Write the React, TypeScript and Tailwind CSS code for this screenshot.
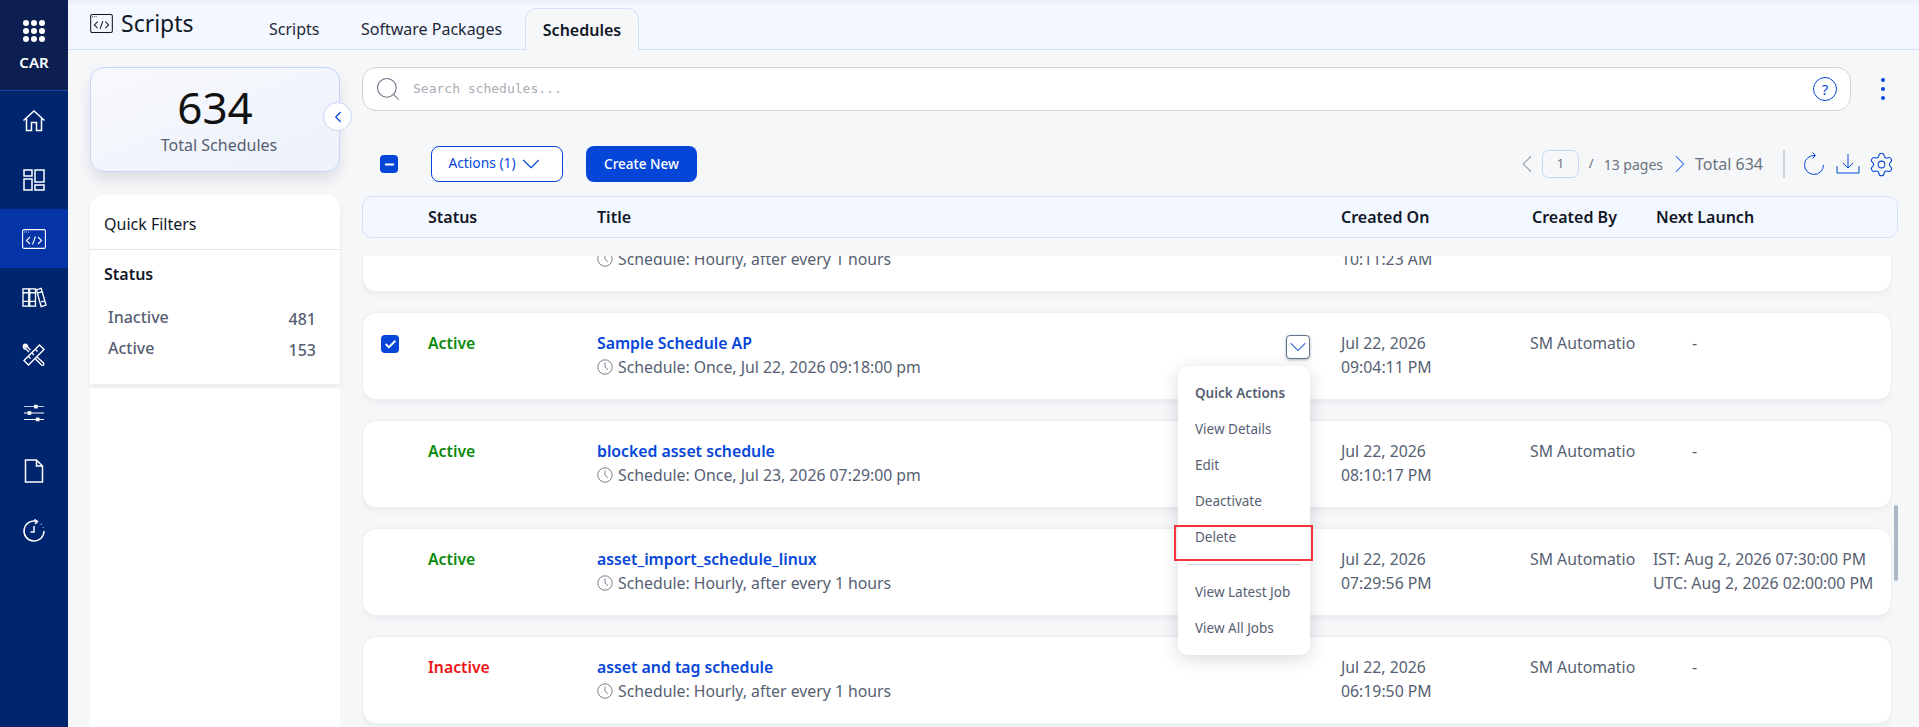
import { ChevronDown, ChevronLeft, ChevronRight, Check, Minus, Search, Settings } from "lucide-react";

const font = { fontFamily: '"Noto Sans", sans-serif' };

function CodeWindow({ className }: { className: string }) {
  return (
    <svg viewBox="0 0 24 20" fill="none" stroke="currentColor" strokeWidth="1.1" className={className}>
      <rect x="0.6" y="0.6" width="22.8" height="18.8" rx="1.5" />
      <path d="M2 3h.8M4 3h.8M6 3h.8" />
      <path d="M8 8l-3.5 3.5L8 15M16 8l3.5 3.5L16 15M13.4 7.500l-2.800 8" />
    </svg>
  );
}

function NavIcon({ name }: { name: string }) {
  const cls = "w-[24px] h-[24px] text-white";
  if (name === "home")
    return (
      <svg viewBox="0 0 24 24" fill="none" stroke="currentColor" strokeWidth="1.5" className={cls}>
        <path d="M1.500 11.500L12 2l10.500 9.500M4.500 9.500V21.500H9.500V13.500H14.500V21.500H19.500V9.500" />
      </svg>
    );
  if (name === "dash")
    return (
      <svg viewBox="0 0 24 24" fill="none" stroke="currentColor" strokeWidth="1.5" className={cls}>
        <rect x="2" y="2" width="8" height="6" />
        <rect x="2" y="11" width="8" height="11" />
        <rect x="13" y="2" width="9" height="12" />
        <rect x="13" y="17" width="9" height="5" />
      </svg>
    );
  if (name === "code") return <CodeWindow className="w-[24px] h-[20px] text-white" />;
  if (name === "library")
    return (
      <svg viewBox="0 0 26 24" fill="none" stroke="currentColor" strokeWidth="1.4" className="w-[25px] h-[23px] text-white">
        <rect x="1" y="3" width="6" height="18" />
        <rect x="8" y="3" width="6" height="18" />
        <path d="M15 4l5-1.500 5 17.500-5 1.500zM1 7h6M1 16h6M8 7h6M8 16h6M16 7.500l5-1.500M20 16.500l3.500-1" />
      </svg>
    );
  if (name === "tools")
    return (
      <svg viewBox="0 0 24 24" fill="none" stroke="currentColor" strokeWidth="1.4" className={cls}>
        <path d="M2 17.500L17.500 2l4.500 4.500L6.500 22z" />
        <path d="M6.500 13.500l2 2M10 10l2 2M13.500 6.500l2 2" />
        <path d="M8.500 7L5.500 4C6 2 4 .800 2.500 1.500L4.500 3.500 3.500 4.500 1.500 2.500C.800 4.500 2 6.500 4 6L7 9M15 14l6.500 6c1 1.500-.500 3-2 2l-6-6" />
      </svg>
    );
  if (name === "sliders")
    return (
      <svg viewBox="0 0 24 24" fill="currentColor" className="w-[22px] h-[22px] text-white">
        <path d="M1 4.500h22v1H1zM1 11.500h22v1H1zM1 18.500h22v1H1z" />
        <rect x="12" y="3" width="4" height="4" />
        <rect x="5" y="10" width="4" height="4" />
        <rect x="14" y="17" width="4" height="4" />
      </svg>
    );
  if (name === "file")
    return (
      <svg viewBox="0 0 20 24" fill="none" stroke="currentColor" strokeWidth="1.5" className="w-[20px] h-[24px] text-white">
        <path d="M1.500 1h11l6 6v16h-17zM12.500 1v6h6" />
      </svg>
    );
  return (
    <svg viewBox="0 0 24 24" fill="none" stroke="currentColor" strokeWidth="1.5" className={cls}>
      <path d="M15 2.500A10 10 0 1 0 22 12" />
      <path d="M12 7v6l-3.500 0M12.500 .500l3 2-2.500 2.500" />
      <path d="M19 5l.500.500M21.200 8l.200.600" />
    </svg>
  );
}

function ClockIcon() {
  return (
    <svg viewBox="0 0 16 16" fill="none" stroke="#6b7280" strokeWidth="0.9" className="w-[16px] h-[16px] shrink-0">
      <circle cx="8" cy="8" r="7.2" />
      <path d="M8 3.500V8l3 2.800" />
    </svg>
  );
}

const nav = ["home", "dash", "code", "library", "tools", "sliders", "file", "clock"];

const rows = [
  // first row is scrolled mostly out of view, only its lower line shows
  { status: "", title: "", schedule: "Schedule: Hourly, after every 1 hours", date: "", time: "10:11:23 AM", by: "", next: [] as string[], checked: false },
  { status: "Active", title: "Sample Schedule AP", schedule: "Schedule: Once, Jul 22, 2026 09:18:00 pm", date: "Jul 22, 2026", time: "09:04:11 PM", by: "SM Automatio", next: [], checked: true },
  { status: "Active", title: "blocked asset schedule", schedule: "Schedule: Once, Jul 23, 2026 07:29:00 pm", date: "Jul 22, 2026", time: "08:10:17 PM", by: "SM Automatio", next: [], checked: false },
  { status: "Active", title: "asset_import_schedule_linux", schedule: "Schedule: Hourly, after every 1 hours", date: "Jul 22, 2026", time: "07:29:56 PM", by: "SM Automatio", next: ["IST: Aug 2, 2026 07:30:00 PM", "UTC: Aug 2, 2026 02:00:00 PM"], checked: false },
  { status: "Inactive", title: "asset and tag schedule", schedule: "Schedule: Hourly, after every 1 hours", date: "Jul 22, 2026", time: "06:19:50 PM", by: "SM Automatio", next: [], checked: false },
];

const menu = ["View Details", "Edit", "Deactivate", "Delete"];

function QuickMenu() {
  return (
    <div className="absolute left-[815px] top-[53px] w-[132px] h-[289px] bg-white rounded-[10px] shadow-[0_4px_18px_rgba(15,23,42,0.16)] pl-[17px] pr-[9px] pt-[15px] z-20 text-[13.5px] text-[#566072]">
      <div className="h-[24px] leading-[24px] font-semibold">Quick Actions</div>
      {menu.map((m) => (
        <div key={m} className="h-[36px] pt-[12px] leading-[24px]">{m}</div>
      ))}
      <div className="border-t border-[#cbd5e1] -ml-[8px] mt-[15px] mb-[15px]" />
      <div className="h-[24px] leading-[24px]">View Latest Job</div>
      <div className="h-[36px] pt-[12px] leading-[24px]">View All Jobs</div>
      <div className="absolute left-[-4px] top-[159px] w-[139px] h-[36px] border-2 border-[#f5333f] pointer-events-none" />
    </div>
  );
}

function Row({ r, first }: { r: (typeof rows)[number]; first?: boolean }) {
  const color = r.status === "Active" ? "text-[#0a8a0a]" : "text-[#f01414]";
  return (
    <div
      className={
        "relative h-[88px] shrink-0 bg-white rounded-[14px] border border-[#eceef2] shadow-[0_2px_6px_rgba(15,23,42,0.06)] grid grid-cols-[47px_169px_744px_189px_124px_1fr] pl-[18px] pt-[18px] text-[15.8px] leading-[24px] text-[#566072] " +
        (r.checked ? "z-10 " : "") +
        (first ? "-mt-[52px]" : "")
      }
    >
      <div>
        {r.checked && (
          <span className="mt-[4px] w-[18px] h-[18px] rounded-[4px] bg-[#0546d9] flex items-center justify-center">
            <Check size={13} strokeWidth={3.5} className="text-white" />
          </span>
        )}
      </div>
      <div className={"font-semibold " + color}>{r.status}</div>
      <div className="relative">
        <div className="font-semibold text-[#0546d9]">{r.title || "\u00a0"}</div>
        <div className="flex items-center gap-[5px]">
          <ClockIcon />
          <span>{r.schedule}</span>
        </div>
        {r.checked && (
          <span className="absolute left-[689px] top-[4px] w-[24px] h-[24px] rounded-[4px] bg-white border border-[#64748b] shadow-[0_1px_3px_rgba(15,23,42,0.35)] flex items-center justify-center">
            <ChevronDown size={28} strokeWidth={0.9} className="shrink-0 text-[#0546d9]" />
          </span>
        )}
      </div>
      <div>
        <div>{r.date || "\u00a0"}</div>
        <div>{r.time}</div>
      </div>
      <div className="whitespace-nowrap">{r.by}</div>
      <div className="whitespace-nowrap">
        {r.next.length ? r.next.map((n) => <div key={n} className="-ml-[1px]">{n}</div>) : r.by && <div className="pl-[38px]">-</div>}
      </div>
      {r.checked && <QuickMenu />}
    </div>
  );
}

export default function App() {
  return (
    <div className="flex h-screen overflow-hidden bg-[#f6f7f9] text-[#111827]" style={font}>
      <aside className="w-[68px] shrink-0 bg-[#00256f] flex flex-col">
        <div className="h-[91px] bg-[#0d1f50] border-b border-[#1746a8] flex flex-col items-center pt-[20px]">
          <div className="grid grid-cols-3 gap-x-[2px] gap-y-[2px]">
            {Array.from({ length: 9 }).map((_, i) => (
              <span key={i} className="w-[6px] h-[6px] rounded-full bg-white" />
            ))}
          </div>
          <div className="mt-[10px] text-[15px] leading-[20px] font-semibold text-white">CAR</div>
        </div>
        {nav.map((n, i) => (
          <div
            key={n}
            className={(i < 3 ? "h-[59px] " : n === "clock" ? "h-[62px] " : "h-[58px] ") + "flex items-center justify-center " + (n === "code" ? "bg-[#0434a5]" : "")}
          >
            <NavIcon name={n} />
          </div>
        ))}
      </aside>

      <div className="flex-1 min-w-0 flex flex-col">
        <header className="h-[50px] shrink-0 bg-[#f3f7ff] border-b border-[#d5e1fa] flex items-end pl-[22px] shadow-[inset_0_3px_3px_rgba(15,23,42,0.03)]">
          <div className="flex items-center self-start pt-[8px] w-[179px]">
            <CodeWindow className="w-[23px] h-[19px] text-[#111827]" />
            <span className="ml-[8px] text-[23px] leading-[30px]">Scripts</span>
          </div>
          <div className="h-[41px] flex items-center text-[16px] text-[#1f2937] w-[92px]">Scripts</div>
          <div className="h-[41px] flex items-center text-[16px] text-[#1f2937] w-[164px]">Software Packages</div>
          <div className="h-[42px] -mb-px w-[114px] flex items-center justify-center text-[16px] font-semibold bg-[#f6f7f9] border border-b-0 border-[#d5e1fa] rounded-t-[12px]">
            Schedules
          </div>
        </header>

        <div className="flex-1 min-h-0 flex">
          <div className="w-[294px] shrink-0 pl-[22px] pt-[17px] flex flex-col">
            <div className="relative w-[250px] h-[105px] shrink-0 rounded-[14px] border border-[#c5d6fb] bg-gradient-to-br from-[#f8f9fc] to-[#ecf1fb] shadow-[0_8px_14px_rgba(15,23,42,0.10)] flex flex-col items-center pt-[14px]">
              <div className="text-[44px] leading-[50px] text-[#111111]">634</div>
              <div className="ml-[8px] text-[16px] leading-[22px] text-[#566072] mt-[2px]">Total Schedules</div>
              <span className="absolute right-[-13px] top-[34px] w-[29px] h-[29px] rounded-full bg-white border border-[#c5d6fb] flex items-center justify-center">
                <ChevronLeft size={18} strokeWidth={1.6} className="text-[#0546d9]" />
              </span>
            </div>
            <div className="mt-[23px] w-[250px] shrink-0 h-[189px] bg-white rounded-t-[14px] shadow-[0_3px_6px_rgba(15,23,42,0.05)]">
              <div className="h-[55px] border-b border-[#e5e7eb] pl-[14px] pt-[17px] text-[16px] leading-[24px] text-[#111827]">Quick Filters</div>
              <div className="pl-[14px] pt-[12px] text-[16px] leading-[24px] font-semibold">Status</div>
              <div className="mt-[19px] pl-[18px] pr-[24px] text-[16px] font-medium text-[#566072]">
                <div className="h-[31px] flex justify-between">
                  <span>Inactive</span>
                  <span className="pt-[2px]">481</span>
                </div>
                <div className="h-[31px] flex justify-between">
                  <span>Active</span>
                  <span className="pt-[2px]">153</span>
                </div>
              </div>
            </div>
            <div className="mt-[4px] w-[250px] flex-1 bg-white" />
          </div>

          <main className="relative flex-1 min-w-0 pt-[17px] pr-[21px] flex flex-col">
            <div className="flex items-center">
              <div className="w-[1489px] h-[44px] bg-white rounded-[14px] border border-[#d1d5db] flex items-center pl-[11px] pr-[13px]">
                <Search size={28} strokeWidth={0.9} className="text-[#6b7280]" />
                <span className="ml-[11px] text-[13px] text-[#a8adb7]" style={{ fontFamily: '"DejaVu Sans Mono", monospace' }}>
                  Search schedules...
                </span>
                <span className="ml-auto w-[24px] h-[24px] rounded-full border border-[#0546d9] text-[#0546d9] text-[15px] flex items-center justify-center">?</span>
              </div>
              <div className="ml-[30px] flex flex-col gap-[5px]">
                <span className="w-[4px] h-[4px] rounded-full bg-[#0546d9]" />
                <span className="w-[4px] h-[4px] rounded-full bg-[#0546d9]" />
                <span className="w-[4px] h-[4px] rounded-full bg-[#0546d9]" />
              </div>
            </div>

            <div className="mt-[35px] h-[36px] flex items-center pl-[18px] pr-[3px]">
              <span className="w-[18px] h-[18px] rounded-[4px] bg-[#0546d9] flex items-center justify-center">
                <Minus size={13} strokeWidth={3.5} className="text-white" />
              </span>
              <div className="ml-[33px] w-[132px] h-[36px] rounded-[8px] border border-[#0546d9] bg-white text-[#0546d9] text-[13.8px] flex items-center justify-center">
                <span className="-mt-[1px]">Actions (1)</span>
                <ChevronDown size={30} strokeWidth={0.9} />
              </div>
              <div className="ml-[23px] w-[111px] h-[36px] rounded-[8px] bg-[#0546d9] text-white text-[13.5px] font-medium flex items-center justify-center">Create New</div>
              <div className="ml-auto flex items-center text-[#6b7280]">
                <ChevronLeft size={30} strokeWidth={0.9} className="text-[#9ca3af]" />
                <span className="w-[37px] h-[28px] rounded-[7px] border border-[#c5d6fb] text-[13px] flex items-center justify-center">1</span>
                <span className="ml-[10px] text-[13px]">/</span>
                <span className="ml-[10px] text-[14px]">13 pages</span>
                <ChevronRight size={30} strokeWidth={0.9} className="ml-[2px] text-[#5b84ee]" />
                <span className="text-[16px]">Total 634</span>
                <span className="ml-[20px] w-[2px] h-[28px] bg-[#cbd5e1]" />
                <svg viewBox="0 0 24 24" fill="none" stroke="#0546d9" strokeWidth="1" className="ml-[17px] w-[24px] h-[24px]">
                  <path d="M13 3.500A9.500 9.500 0 1 0 21.500 13" />
                  <path d="M10.500 .500l3 3-3 3" />
                </svg>
                <svg viewBox="0 0 24 24" fill="none" stroke="#0546d9" strokeWidth="1" className="ml-[10px] w-[24px] h-[24px]">
                  <path d="M12 2v14M7 11l5 5 5-5M1 14v7h22v-7" />
                </svg>
                <Settings size={27} strokeWidth={0.9} className="ml-[8px] text-[#0546d9]" />
              </div>
            </div>

            <div className="mt-[14px] w-[1536px] h-[42px] shrink-0 rounded-[10px] border border-[#d5e1fa] bg-[#f3f7ff] grid grid-cols-[47px_169px_744px_191px_124px_1fr] pl-[18px] items-center text-[16px] font-semibold">
              <div />
              <div>Status</div>
              <div>Title</div>
              <div>Created On</div>
              <div>Created By</div>
              <div>Next Launch</div>
            </div>

            <div className="relative mt-[18px] w-[1530px] flex-1 min-h-0 overflow-hidden flex flex-col gap-[20px]">
              {rows.map((r, i) => (
                <Row key={i} r={r} first={i === 0} />
              ))}
            </div>
            <div className="absolute right-[21px] top-[455px] w-[4px] h-[76px] rounded-full bg-[#a9b8c4]" />
          </main>
        </div>
      </div>
    </div>
  );
}
